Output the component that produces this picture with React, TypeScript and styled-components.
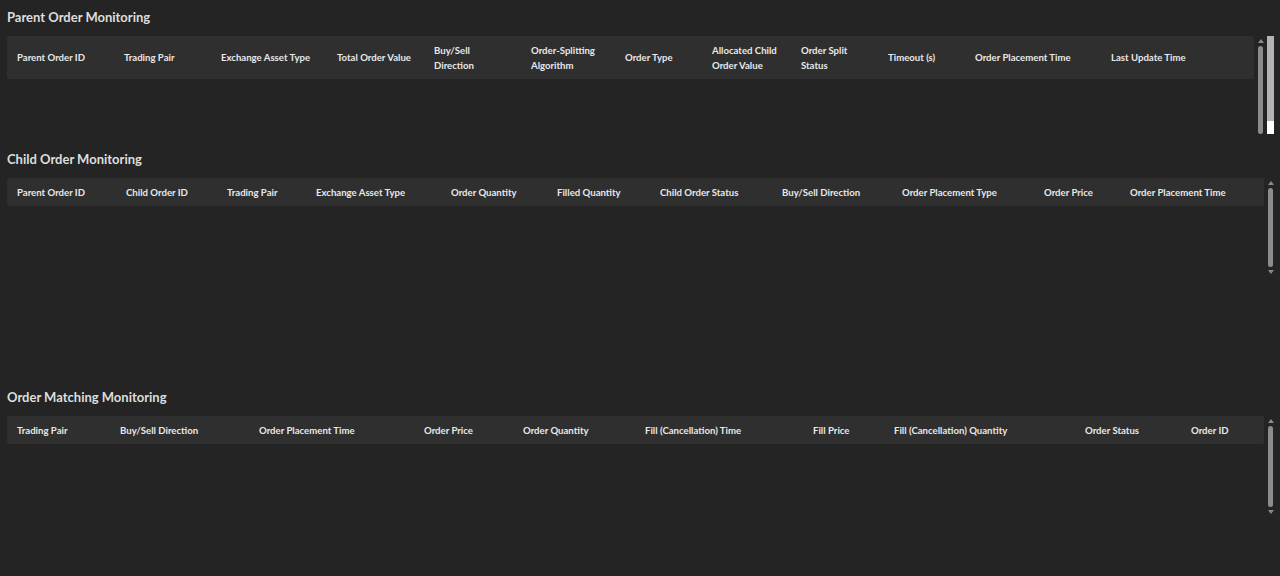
import styled, { createGlobalStyle } from "styled-components";

const GlobalStyle = createGlobalStyle`
  html, body {
    margin: 0;
    background: #242424;
    font-family: Lato, "Noto Sans", sans-serif;
    color: #e4e4e4;
  }
`;

const Page = styled.div`
  width: 1280px;
  height: 576px;
  overflow: hidden;
  padding: 0 6px 0 7px;
  box-sizing: border-box;
`;

const Section = styled.section<{ $height: number; $top: number }>`
  height: ${({ $height }) => $height}px;
  padding-top: ${({ $top }) => $top}px;
  box-sizing: border-box;
  display: flex;
  flex-direction: column;
  gap: 10px;
`;

const Title = styled.h3`
  margin: 0;
  font-size: 13px;
  line-height: 18px;
  font-weight: 700;
  color: #dedede;
`;

const TableBox = styled.div<{ $height: number }>`
  height: ${({ $height }) => $height}px;
  display: flex;
  gap: 3px;
`;

const TableArea = styled.div`
  flex: 1;
  display: flex;
  flex-direction: column;
`;

const HeaderRow = styled.div<{ $cols: string; $tall?: boolean }>`
  display: grid;
  grid-template-columns: ${({ $cols }) => $cols};
  align-items: center;
  height: ${({ $tall }) => ($tall ? 43 : 28)}px;
  background: #2f2f2f;
  border-radius: 2px;
`;

const HeadCell = styled.div`
  padding-left: 10px;
  font-size: 9.6px;
  font-weight: 700;
  line-height: 15px;
  color: #e8e8e8;
  white-space: pre-line;
`;

const Track = styled.div<{ $light?: boolean }>`
  width: 7px;
  display: flex;
  flex-direction: column;
  align-items: center;
  gap: 3px;
  padding-top: 3px;
  box-sizing: border-box;
  background: ${({ $light }) => ($light ? "#b4b4b4" : "transparent")};
`;

const Arrow = styled.div<{ $down?: boolean }>`
  width: 0;
  height: 0;
  border-left: 3px solid transparent;
  border-right: 3px solid transparent;
  ${({ $down }) =>
    $down ? "border-top: 4px solid #8a8a8a;" : "border-bottom: 4px solid #8a8a8a;"}
`;

const Thumb = styled.div`
  flex: 1;
  width: 5px;
  border-radius: 3px;
  background: #8c8c8c;
`;

const PageThumb = styled.div`
  margin-top: auto;
  width: 7px;
  height: 13px;
  background: #ffffff;
`;

type Table = {
  title: string;
  cols: number[];
  heads: string[];
  tall?: boolean;
  height: number;
  sectionHeight: number;
  top: number;
  pageBar?: boolean;
  downArrow?: boolean;
};

const tables: Table[] = [
  {
    title: "Parent Order Monitoring",
    cols: [107, 97, 116, 97, 97, 94, 87, 89, 87, 87, 136],
    heads: [
      "Parent Order ID",
      "Trading Pair",
      "Exchange Asset Type",
      "Total Order Value",
      "Buy/Sell\nDirection",
      "Order-Splitting\nAlgorithm",
      "Order Type",
      "Allocated Child\nOrder Value",
      "Order Split\nStatus",
      "Timeout (s)",
      "Order Placement Time",
      "Last Update Time",
    ],
    tall: true,
    height: 98,
    sectionHeight: 150,
    top: 8,
    pageBar: true,
  },
  {
    title: "Child Order Monitoring",
    cols: [109, 101, 89, 135, 106, 103, 122, 120, 142, 86],
    heads: [
      "Parent Order ID",
      "Child Order ID",
      "Trading Pair",
      "Exchange Asset Type",
      "Order Quantity",
      "Filled Quantity",
      "Child Order Status",
      "Buy/Sell Direction",
      "Order Placement Type",
      "Order Price",
      "Order Placement Time",
    ],
    height: 96,
    sectionHeight: 238,
    top: 0,
    downArrow: true,
  },
  {
    title: "Order Matching Monitoring",
    cols: [103, 139, 165, 99, 122, 168, 81, 191, 106],
    heads: [
      "Trading Pair",
      "Buy/Sell Direction",
      "Order Placement Time",
      "Order Price",
      "Order Quantity",
      "Fill (Cancellation) Time",
      "Fill Price",
      "Fill (Cancellation) Quantity",
      "Order Status",
      "Order ID",
    ],
    height: 98,
    sectionHeight: 188,
    top: 0,
    downArrow: true,
  },
];

function Monitor({ t }: { t: Table }) {
  const cols = t.cols.map((c) => `${c}px`).join(" ") + " 1fr";
  return (
    <Section $height={t.sectionHeight} $top={t.top}>
      <Title>{t.title}</Title>
      <TableBox $height={t.height}>
        <TableArea>
          <HeaderRow $cols={cols} $tall={t.tall}>
            {t.heads.map((h) => (
              <HeadCell key={h}>{h}</HeadCell>
            ))}
          </HeaderRow>
        </TableArea>
        <Track>
          <Arrow />
          <Thumb />
          {t.downArrow && <Arrow $down />}
        </Track>
        {t.pageBar && (
          <Track $light>
            <PageThumb />
          </Track>
        )}
      </TableBox>
    </Section>
  );
}

export default function App() {
  return (
    <>
      <GlobalStyle />
      <Page>
        {tables.map((t) => (
          <Monitor key={t.title} t={t} />
        ))}
      </Page>
    </>
  );
}
